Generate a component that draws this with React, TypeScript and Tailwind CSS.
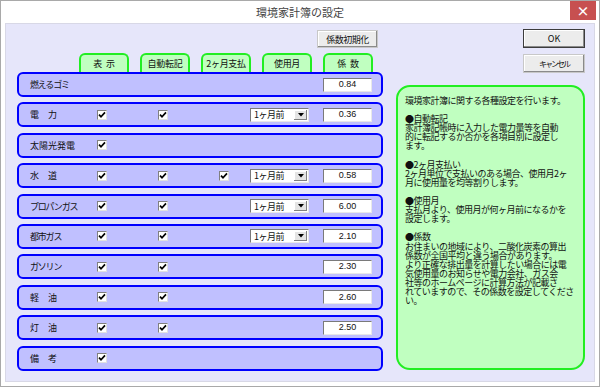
import { ReactNode } from "react";

type Row = {
  label: string;
  kana?: boolean;
  show?: boolean;
  auto?: boolean;
  twoMonth?: boolean;
  month?: boolean;
  coef?: string;
};

const rows: Row[] = [
  { label: "燃えるゴミ", kana: true, coef: "0.84" },
  { label: "電\u3000力", show: true, auto: true, month: true, coef: "0.36" },
  { label: "太陽光発電", show: true },
  { label: "水\u3000道", show: true, auto: true, twoMonth: true, month: true, coef: "0.58" },
  { label: "プロパンガス", kana: true, show: true, auto: true, month: true, coef: "6.00" },
  { label: "都市ガス", kana: true, show: true, auto: true, month: true, coef: "2.10" },
  { label: "ガソリン", kana: true, show: true, auto: true, coef: "2.30" },
  { label: "軽\u3000油", show: true, auto: true, coef: "2.60" },
  { label: "灯\u3000油", show: true, auto: true, coef: "2.50" },
  { label: "備\u3000考", show: true },
];

const tabs = ["表\u2002示", "自動転記", "2ヶ月支払", "使用月", "係\u2002数"];

const help = `環境家計簿に関する各種設定を行います。

●自動転記
家計簿記帳時に入力した電力量等を自動
的に転記するか否かを各項目別に設定し
ます。

●2ヶ月支払い
2ヶ月単位で支払いのある場合、使用月2ヶ
月に使用量を均等割りします。

●使用月
支払月より、使用月が何ヶ月前になるかを
設定します。

●係数
お住まいの地域により、二酸化炭素の算出
係数が全国平均と違う場合があります。
より正確な排出量を計算したい場合には電
気使用量のお知らせや電力会社、ガス会
社等のホームページに計算方法が記載さ
れていますので、その係数を設定してくださ
い。`;

function Check() {
  return (
    <span className="flex h-[10px] w-[10px] items-center justify-center border border-t-[#808080] border-l-[#808080] border-r-[#e0e0e0] border-b-[#e0e0e0] bg-white">
      <svg width="8" height="8" viewBox="0 0 8 8">
        <path d="M1 3.6 L3 5.8 L7 1.4" fill="none" stroke="#000" strokeWidth="1.7" />
      </svg>
    </span>
  );
}

function Sunken({ children, className }: { children: ReactNode; className: string }) {
  return (
    <div
      className={
        "flex h-[14px] items-center border border-t-[#7a7a7a] border-l-[#7a7a7a] border-r-[#e8e8e8] border-b-[#e8e8e8] bg-white " +
        className
      }
    >
      {children}
    </div>
  );
}

function MonthSelect() {
  return (
    <Sunken className="w-[59px] justify-between pl-[3px] pr-[1px]">
      <span className="text-[9px] leading-none tracking-[-0.5px]">1ヶ月前</span>
      <span className="flex h-[10px] w-[13px] items-center justify-center bg-[#e4e4e4] shadow-[inset_-1px_-1px_0_#808080,inset_1px_1px_0_#ffffff]">
        <svg width="6" height="4" viewBox="0 0 6 4">
          <path d="M0 0 H6 L3 3.5 Z" fill="#000" />
        </svg>
      </span>
    </Sunken>
  );
}

function Button({ children, strong }: { children: ReactNode; strong?: boolean }) {
  return (
    <div
      className={
        "flex h-[19px] w-[62px] items-center justify-center bg-[#ececec] leading-none shadow-[inset_-1px_-1px_0_#8a8a8a,inset_1px_1px_0_#ffffff] " +
        (strong ? "border border-[#3c3c3c]" : "border border-[#c8c8c8]")
      }
    >
      {children}
    </div>
  );
}

function App() {
  return (
    <div
      className="flex h-[387px] w-[600px] flex-col border border-[#a9a9a9] bg-white text-[#111]"
      style={{ fontFamily: '"Noto Sans CJK JP", "Liberation Sans", sans-serif' }}
    >
      <div className="grid h-[22px] grid-cols-[1fr_auto_1fr] items-center">
        <span />
        <span className="text-[11px] text-[#444]">環境家計簿の設定</span>
        <div className="flex h-full justify-end pr-[3px]">
          <span className="flex h-[19px] w-[26px] items-center justify-center bg-[#c75050] text-[13px] font-bold leading-none text-white">
            ×
          </span>
        </div>
      </div>

      <div className="mx-[4px] mb-[4px] flex flex-1 border border-[#d8d8e6] bg-[#e6e6fa]">
        <div className="ml-[11px] flex w-[366px] flex-col pt-[6px]">
          <div className="ml-[300px] flex h-[18px] w-[61px] items-center justify-center border border-[#c8c8c8] bg-[#ececec] text-[9px] leading-none tracking-[-0.5px] shadow-[inset_-1px_-1px_0_#8a8a8a,inset_1px_1px_0_#ffffff]">
            係数初期化
          </div>
          <div className="ml-[62px] mt-[5px] flex gap-[11px]">
            {tabs.map((t) => (
              <div
                key={t}
                className="flex h-[19px] w-[50px] items-center justify-center rounded-t-[6px] border-2 border-b-0 border-[#22ee22] bg-[#c0ffc0] pb-[1px] text-[9px] leading-none tracking-[-0.3px]"
              >
                {t}
              </div>
            ))}
          </div>
          <div className="flex flex-col gap-[5.4px]">
            {rows.map((r) => (
              <div
                key={r.label}
                className="grid h-[25px] grid-cols-[67px_61px_61px_31px_73px_49px] items-center rounded-[6px] border-2 border-[#0000ff] bg-[#c0c0ff] pl-[11px]"
              >
                <span
                  className={
                    "whitespace-pre text-[9px] leading-none " + (r.kana ? "tracking-[-1.2px]" : "")
                  }
                >
                  {r.label}
                </span>
                <span>{r.show && <Check />}</span>
                <span>{r.auto && <Check />}</span>
                <span>{r.twoMonth && <Check />}</span>
                <span>{r.month && <MonthSelect />}</span>
                <span>
                  {r.coef && (
                    <Sunken className="w-[49px] justify-center">
                      <span className="text-[9px] leading-none" style={{ fontFamily: '"Liberation Sans", sans-serif' }}>
                        {r.coef}
                      </span>
                    </Sunken>
                  )}
                </span>
              </div>
            ))}
          </div>
        </div>

        <div className="ml-[13px] flex w-[189px] flex-col pt-[5px]">
          <div className="ml-auto flex flex-col gap-[6px]">
            <Button strong>
              <span className="text-[9px]">OK</span>
            </Button>
            <Button>
              <span className="text-[8px] tracking-[-2px]">キャンセル</span>
            </Button>
          </div>
          <div className="mt-[12px] h-[285px] rounded-[14px] border-2 border-[#22ee22] bg-[#c0ffc0] pl-[7px] pt-[9px]">
            <p className="whitespace-pre text-[9px] leading-[9.1px] tracking-[-0.5px]">{help}</p>
          </div>
        </div>
      </div>
    </div>
  );
}

export default App;
